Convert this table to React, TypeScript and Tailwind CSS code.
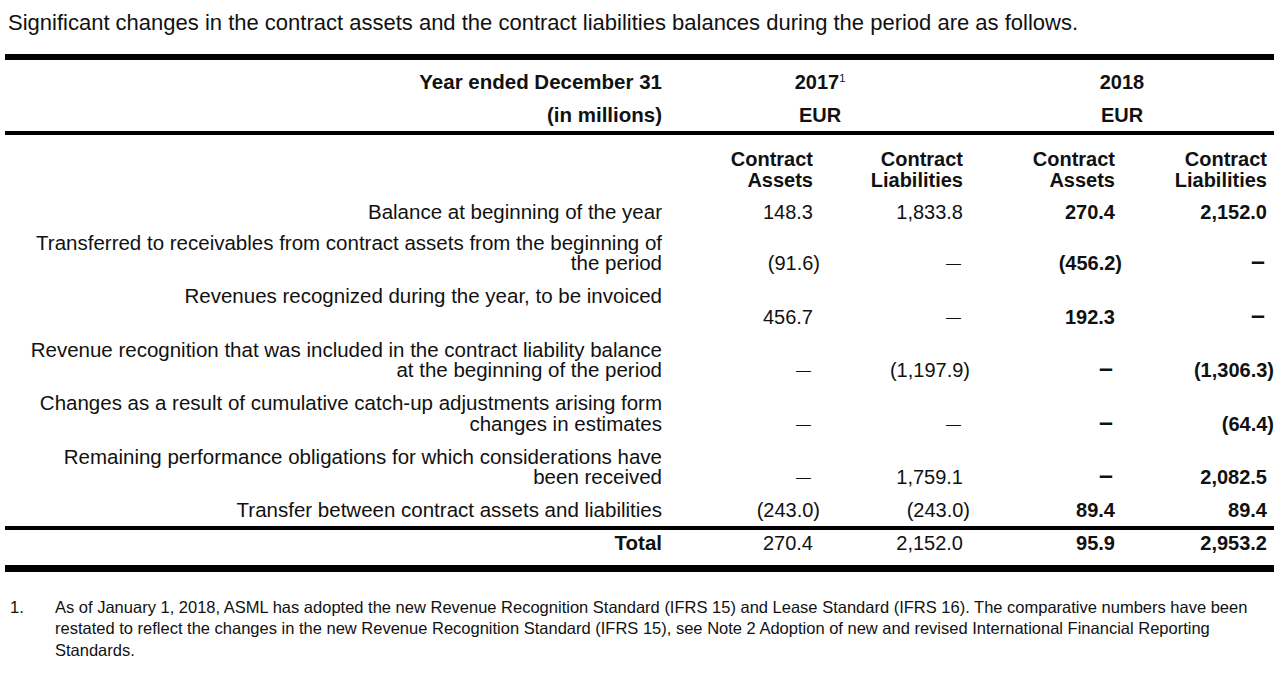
import React from "react";

type Cell = { v: string; bold?: boolean };

const rows: { label: React.ReactNode; cells: string[]; gap?: string }[] = [
  { label: "Balance at beginning of the year", cells: ["148.3", "1,833.8", "270.4", "2,152.0"], gap: "pt-[12px]" },
  {
    label: (
      <>
        Transferred to receivables from contract assets from the beginning of
        <br />
        the period
      </>
    ),
    cells: ["(91.6)", "—", "(456.2)", "—"],
    gap: "pt-[10px]",
  },
  {
    label: (
      <>
        Revenues recognized during the year, to be invoiced
        <br />
        &nbsp;
      </>
    ),
    cells: ["456.7", "—", "192.3", "—"],
  },
  {
    label: (
      <>
        Revenue recognition that was included in the contract liability balance
        <br />
        at the beginning of the period
      </>
    ),
    cells: ["—", "(1,197.9)", "—", "(1,306.3)"],
  },
  {
    label: (
      <>
        Changes as a result of cumulative catch-up adjustments arising form
        <br />
        changes in estimates
      </>
    ),
    cells: ["—", "—", "—", "(64.4)"],
  },
  {
    label: (
      <>
        Remaining performance obligations for which considerations have
        <br />
        been received
      </>
    ),
    cells: ["—", "1,759.1", "—", "2,082.5"],
  },
  {
    label: "Transfer between contract assets and liabilities",
    cells: ["(243.0)", "(243.0)", "89.4", "89.4"],
  },
];

function Value({ v, bold }: Cell) {
  if (v === "—") {
    if (bold) {
      return (
        <div className="text-right pr-[9px] font-bold">
          <span className="text-[25px]">–</span>
        </div>
      );
    }
    return (
      <div className="text-right pr-[9px]">
        <span className="text-[15px]">—</span>
      </div>
    );
  }
  const paren = v.endsWith(")");
  return (
    <div className={`text-right ${paren ? "pr-0" : "pr-[7px]"} ${bold ? "font-bold" : ""}`}>{v}</div>
  );
}

export default function App() {
  return (
    <div className="w-[1287px] h-[675px] bg-white text-[#111] font-['Liberation_Sans',Arial,sans-serif] overflow-hidden">
      <p className="pl-[8px] pt-[11px] text-[22px] leading-[24px]">
        Significant changes in the contract assets and the contract liabilities balances during the period are as follows.
      </p>

      <div className="ml-[5px] w-[1269px] mt-[19px] text-[20px] leading-[20.5px]">
        <div className="h-[6px] bg-black" />

        {/* header */}
        <div className="grid grid-cols-[665px_150px_150px_152px_152px] pt-[12px] font-bold">
          <div className="text-right pr-[8px] text-[20.5px]">Year ended December 31</div>
          <div className="col-span-2 text-center">
            2017<span className="relative -top-[7px] text-[11px] font-normal leading-none">1</span>
          </div>
          <div className="col-span-2 text-center">2018</div>
        </div>
        <div className="grid grid-cols-[665px_150px_150px_152px_152px] pt-[12.5px] font-bold">
          <div className="text-right pr-[8px] text-[20.5px]">(in millions)</div>
          <div className="col-span-2 text-center">EUR</div>
          <div className="col-span-2 text-center">EUR</div>
        </div>
        <div className="h-[4px] bg-black mt-[5.5px]" />

        <div className="grid grid-cols-[665px_150px_150px_152px_152px] pt-[14px] font-bold">
          <div />
          <div className="text-right pr-[7px]">Contract<br />Assets</div>
          <div className="text-right pr-[7px]">Contract<br />Liabilities</div>
          <div className="text-right pr-[7px]">Contract<br />Assets</div>
          <div className="text-right pr-[7px]">Contract<br />Liabilities</div>
        </div>

        {rows.map((r, i) => (
          <div
            key={i}
            className={`grid grid-cols-[665px_150px_150px_152px_152px] items-end ${r.gap ?? "pt-[12.5px]"}`}
          >
            <div className="text-right pr-[8px] text-[20.5px]">{r.label}</div>
            {r.cells.map((c, j) => (
              <Value key={j} v={c} bold={j >= 2} />
            ))}
          </div>
        ))}

        <div className="h-[4px] bg-black mt-[5.5px]" />
        <div className="grid grid-cols-[665px_150px_150px_152px_152px] pt-[3px]">
          <div className="text-right pr-[8px] font-bold text-[20.5px]">Total</div>
          <Value v="270.4" />
          <Value v="2,152.0" />
          <Value v="95.9" bold />
          <Value v="2,953.2" bold />
        </div>
        <div className="h-[7px] bg-black mt-[11px]" />
      </div>

      <div className="flex pt-[25px] text-[16.5px] leading-[21.5px]">
        <div className="w-[55px] pl-[10px] shrink-0">1.</div>
        <div>
          As of January 1, 2018, ASML has adopted the new Revenue Recognition Standard (IFRS 15) and Lease Standard (IFRS 16). The comparative numbers have been
          <br />
          restated to reflect the changes in the new Revenue Recognition Standard (IFRS 15), see Note 2 Adoption of new and revised International Financial Reporting
          <br />
          Standards.
        </div>
      </div>
    </div>
  );
}
